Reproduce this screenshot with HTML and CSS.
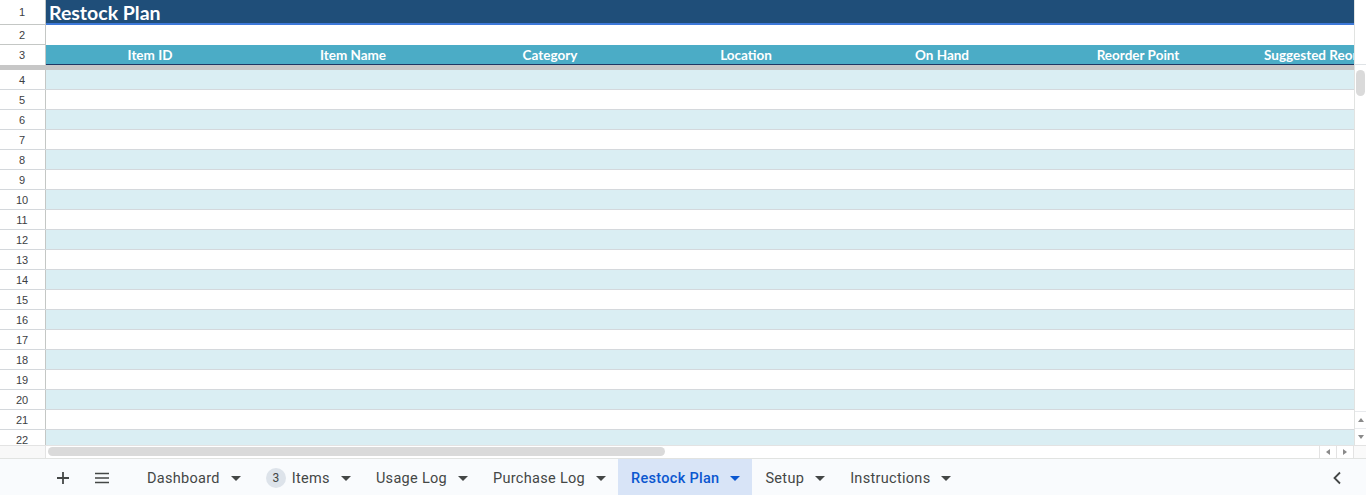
FILE: index.html
```html
<!DOCTYPE html>
<html lang="en">
<head>
  <meta charset="UTF-8" />
  <title>Restock Plan</title>
  <link rel="stylesheet" href="styles.css">
</head>
<body>
  <div class="sheet">
    <div class="grid-wrap">
      <div class="grid">
        <div class="row title-row">
          <div class="rh">1</div>
          <div class="title-cell">Restock Plan</div>
        </div>
        <div class="row blank-row">
          <div class="rh">2</div>
          <div class="fill"></div>
        </div>
        <div class="row head-row">
          <div class="rh">3</div>
          <div class="col col-a">Item ID</div>
          <div class="col col-b">Item Name</div>
          <div class="col">Category</div>
          <div class="col">Location</div>
          <div class="col">On Hand</div>
          <div class="col">Reorder Point</div>
          <div class="col col-last">Suggested Reorder Qty</div>
        </div>
        <div class="freeze"></div>
        <div id="body-rows"></div>
      </div>
      <div class="vscroll">
        <div class="vs-top"></div>
        <div class="vs-track"><div class="vs-thumb"></div></div>
        <div class="vs-btn"><span class="tri up"></span></div>
        <div class="vs-btn"><span class="tri down"></span></div>
      </div>
    </div>

    <div class="hscroll">
      <div class="hs-corner"></div>
      <div class="hs-track"><div class="hs-thumb"></div></div>
      <div class="hs-btn"><span class="tri left"></span></div>
      <div class="hs-btn"><span class="tri right"></span></div>
      <div class="hs-end"></div>
    </div>

    <div class="tabbar">
      <div class="tool plus">
        <svg width="14" height="14" viewBox="0 0 14 14"><path d="M7 1v12M1 7h12" stroke="#444746" stroke-width="1.8"/></svg>
      </div>
      <div class="tool menu">
        <svg width="16" height="12" viewBox="0 0 16 12"><path d="M1 1.5h14M1 6h14M1 10.5h14" stroke="#444746" stroke-width="1.6"/></svg>
      </div>
      <div class="tab">Dashboard<span class="caret"></span></div>
      <div class="tab"><span class="badge">3</span>Items<span class="caret"></span></div>
      <div class="tab">Usage Log<span class="caret"></span></div>
      <div class="tab">Purchase Log<span class="caret"></span></div>
      <div class="tab active">Restock Plan<span class="caret"></span></div>
      <div class="tab">Setup<span class="caret"></span></div>
      <div class="tab">Instructions<span class="caret"></span></div>
      <div class="collapse">
        <svg width="10" height="14" viewBox="0 0 10 14"><path d="M8 1.5L2.5 7 8 12.5" fill="none" stroke="#444746" stroke-width="1.8"/></svg>
      </div>
    </div>
  </div>

  <script>
    const rows = document.getElementById("body-rows");
    for (let n = 4; n <= 22; n++) {
      const row = document.createElement("div");
      row.className = "row data-row" + (n % 2 === 0 ? " band" : "");
      const rh = document.createElement("div");
      rh.className = "rh";
      rh.innerText = n;
      const fill = document.createElement("div");
      fill.className = "fill";
      row.appendChild(rh);
      row.appendChild(fill);
      rows.appendChild(row);
    }
  </script>
</body>
</html>
```

FILE: styles.css
```css
body {
  margin: 0;
  font-family: Arial, "Liberation Sans", sans-serif;
  background: #fff;
  overflow: hidden;
}

.sheet {
  width: 1366px;
  height: 495px;
  display: flex;
  flex-direction: column;
}

.grid-wrap {
  display: flex;
  height: 445px;
}

.grid {
  width: 1354px;
  overflow: hidden;
}

.row {
  display: flex;
  box-sizing: border-box;
}

.rh {
  width: 46px;
  flex: none;
  box-sizing: border-box;
  border-right: 1px solid #c4c7c5;
  border-bottom: 1px solid #c4c7c5;
  background: #fff;
  font-size: 11px;
  color: #3c4043;
  display: flex;
  align-items: center;
  justify-content: center;
  padding-right: 1px;
}

.fill {
  flex: 1;
}

/* row 1 */
.title-row {
  height: 25px;
}

.title-cell {
  flex: 1;
  background: #1f4e79;
  border-bottom: 2px solid #3c78d8;
  color: #fff;
  font-family: Lato, sans-serif;
  font-weight: 700;
  font-size: 19.5px;
  line-height: 25px;
  padding-left: 3px;
}

/* row 2 */
.blank-row {
  height: 20px;
}

/* row 3 */
.head-row {
  height: 20px;
}

.head-row .rh {
  border-bottom: none;
}

.col {
  width: 196px;
  flex: none;
  background: #4bacc6;
  border-bottom: 1px solid #1f3864;
  color: #fff;
  font-family: Lato, sans-serif;
  font-weight: 700;
  font-size: 13.5px;
  line-height: 21px;
  text-align: center;
  white-space: nowrap;
  overflow: hidden;
}

.col-a { width: 208px; }
.col-b { width: 198px; }
.col-last { width: 118px; text-align: left; padding-left: 28px; }

.freeze {
  height: 5px;
  background: #c7c7c7;
}

/* body rows */
.data-row {
  height: 20px;
  border-bottom: 1px solid #d4d8dc;
}

.data-row .rh {
  border-bottom: none;
}

.data-row.band .fill {
  background: #daeef3;
}

/* vertical scrollbar */
.vscroll {
  width: 12px;
  border-left: 1px solid #e1e3e1;
  box-sizing: border-box;
  display: flex;
  flex-direction: column;
  background: #fff;
}

.vs-top {
  height: 65px;
  border-bottom: 1px solid #dfe3e6;
  box-sizing: border-box;
}

.vs-track {
  flex: 1;
  padding: 5px 0 0 1px;
}

.vs-thumb {
  width: 9px;
  height: 26px;
  background: #dadada;
  border-radius: 5px;
}

.vs-btn {
  height: 16px;
  display: flex;
  align-items: center;
  justify-content: center;
  border-top: 1px solid #e8eaed;
}

/* horizontal scrollbar */
.hscroll {
  height: 13px;
  display: flex;
  border-top: 1px solid #e3e3e3;
  box-sizing: border-box;
}

.hs-corner {
  width: 46px;
  background: #f8f8f8;
  border-right: 1px solid #e3e3e3;
  box-sizing: border-box;
}

.hs-track {
  flex: 1;
  padding: 1px 0 0 2px;
}

.hs-thumb {
  width: 617px;
  height: 9px;
  background: #dadada;
  border-radius: 5px;
}

.hs-btn {
  width: 16px;
  display: flex;
  align-items: center;
  justify-content: center;
  border-left: 1px solid #e3e3e3;
}

.hs-end {
  width: 12px;
  border-left: 1px solid #e3e3e3;
  background: #fafafa;
}

.tri {
  width: 0;
  height: 0;
  border: 3px solid transparent;
}

.tri.up { border-bottom: 4px solid #8a8a8a; border-top: none; }
.tri.down { border-top: 4px solid #8a8a8a; border-bottom: none; }
.tri.left { border-right: 4px solid #8a8a8a; border-left: none; }
.tri.right { border-left: 4px solid #8a8a8a; border-right: none; }

/* sheet tabs */
.tabbar {
  flex: 1;
  display: flex;
  align-items: stretch;
  background: #f9fbfd;
  border-top: 1px solid #e1e3e1;
  padding-left: 43px;
  font-family: Roboto, sans-serif;
  font-size: 14.5px;
  letter-spacing: 0.3px;
  color: #444746;
}

.tool {
  width: 39px;
  display: flex;
  align-items: center;
  justify-content: center;
  padding-top: 2px;
}

.tool.menu {
  margin-right: 13px;
}

.tab {
  display: flex;
  align-items: center;
  padding: 2px 12px 0 13px;
  white-space: nowrap;
}

.tab.active {
  background: #d8e4f7;
  color: #0b57d0;
  font-weight: 500;
}

.caret {
  width: 0;
  height: 0;
  border-left: 5px solid transparent;
  border-right: 5px solid transparent;
  border-top: 5px solid #444746;
  margin-left: 11px;
}

.tab.active .caret {
  border-top-color: #0b57d0;
}

.badge {
  width: 20px;
  height: 20px;
  border-radius: 50%;
  background: #dde3ea;
  font-size: 12px;
  letter-spacing: 0;
  display: inline-flex;
  align-items: center;
  justify-content: center;
  margin-right: 6px;
}

.collapse {
  margin-left: auto;
  width: 34px;
  display: flex;
  align-items: center;
  padding-top: 2px;
}
```
